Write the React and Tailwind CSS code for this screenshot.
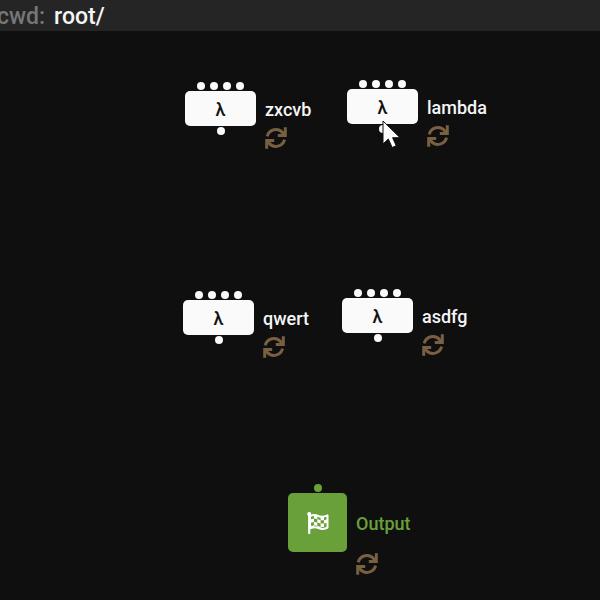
import React from "react";

const lambdaNodes = [
  { name: "zxcvb", place: "left-[185px] top-[51px]" },
  { name: "lambda", place: "left-[347px] top-[49px]" },
  { name: "qwert", place: "left-[183px] top-[260px]" },
  { name: "asdfg", place: "left-[342px] top-[258px]" },
];

function SyncIcon() {
  return (
    <svg viewBox="0 0 22 22" className="size-[22px]" fill="none" stroke="#786041" strokeWidth="3" aria-hidden="true">
      <path d="M2.2 9.3A8.900 8.900 0 0 1 17.800 5.800L19.400 7.600" />
      <path d="M20.300 0.300V8.600H12.800" />
      <path d="M19.600 12.700A8.900 8.900 0 0 1 4.200 16.200L2.600 14.400" />
      <path d="M1.700 21.700V13.400H9.200" />
      <path d="M16.400 8.600L20.300 4.700V8.600ZM5.600 13.400L1.700 17.300V13.400Z" fill="#786041" stroke="none" />
    </svg>
  );
}

function FlagIcon() {
  return (
    <svg viewBox="0 0 22 22" className="size-[22px]" aria-hidden="true">
      <path d="M2.2 1.8V21" stroke="#fff" strokeWidth="2.2" strokeLinecap="round" />
      <circle cx="2.2" cy="2" r="2" fill="#fff" />
      <path d="M3 4.2C7 2 9.500 3.200 12 4.200C15 5.300 17.500 4.600 20.500 3.400V15.600C17 17.600 14.500 17.200 11.500 16C8.500 14.900 6 15 3 16.400Z" fill="#69a03a" stroke="#fff" strokeWidth="2" strokeLinejoin="round" />
      <path d="M7 3.300L10.300 3.600V7L7 6.600ZM13.600 4.800L17 4.600V8.200L13.600 8.200ZM3.500 7.400L7 6.600V10L3.500 10.700ZM10.300 7L13.600 8.200V11.500L10.300 10.400ZM17 8.200L20.500 7.200V10.700L17 11.500ZM7 10L10.300 10.400V13.800L7 13.400ZM13.600 11.500L17 11.500V15L13.600 15ZM3.500 14L7 13.400V16L3.500 16.400ZM10.300 13.800L13.600 15V17L10.300 16Z" fill="#fff" />
    </svg>
  );
}

function Port({ className }) {
  return <span className={`size-2 rounded-full ${className}`} />;
}

function LambdaNode({ name, place }) {
  return (
    <div className={`absolute flex gap-[9px] ${place}`}>
      <div className="flex w-[71px] flex-col items-center gap-px">
        <div className="flex gap-[5px]">
          <Port className="bg-[#fafafa]" />
          <Port className="bg-[#fafafa]" />
          <Port className="bg-[#fafafa]" />
          <Port className="bg-[#fafafa]" />
        </div>
        <button type="button" aria-label={name} className="flex h-[35px] w-full items-center justify-center rounded-[5px] bg-[#fafafa] pt-[2px] text-lg font-medium text-[#111]">
          λ
        </button>
        <Port className="bg-[#fafafa]" />
      </div>
      <div className="pt-4">
        <div className="mb-[5px] text-lg leading-6 font-medium">{name}</div>
        <SyncIcon />
      </div>
    </div>
  );
}

function OutputNode() {
  return (
    <div className="absolute top-[453px] left-[288px] flex gap-[9px]">
      <div className="flex flex-col items-center gap-px">
        <Port className="bg-[#69a03a]" />
        <button type="button" aria-label="Output" className="flex size-[59px] items-center justify-center rounded-[5px] bg-[#69a03a]">
          <FlagIcon />
        </button>
      </div>
      <div className="pt-7">
        <div className="mb-[17px] text-lg leading-6 font-medium text-[#69a03a]">Output</div>
        <SyncIcon />
      </div>
    </div>
  );
}

function Cursor() {
  return (
    <svg viewBox="0 0 20 30" className="absolute top-[89px] left-[382px] h-[30px] w-5" aria-hidden="true">
      <path d="M1 1V24L6.300 19L10.200 27.500L14.200 25.700L10.600 17.700H18Z" fill="#fff" stroke="#111" strokeWidth="1" />
    </svg>
  );
}

export default function App() {
  return (
    <div className="flex min-h-screen flex-col overflow-hidden bg-[#0f0f0f] font-['Roboto','Noto_Sans',sans-serif] text-[#f5f5f5]">
      <header className="flex h-[31px] items-center gap-[9px] bg-[#252525] pt-0.5 text-[23px] leading-6 font-medium">
        <span className="-ml-[3px] text-[#777]">cwd:</span>
        <span>root/</span>
      </header>
      <main className="relative flex-1">
        {lambdaNodes.map((node) => (
          <LambdaNode key={node.name} name={node.name} place={node.place} />
        ))}
        <OutputNode />
        <Cursor />
      </main>
    </div>
  );
}
